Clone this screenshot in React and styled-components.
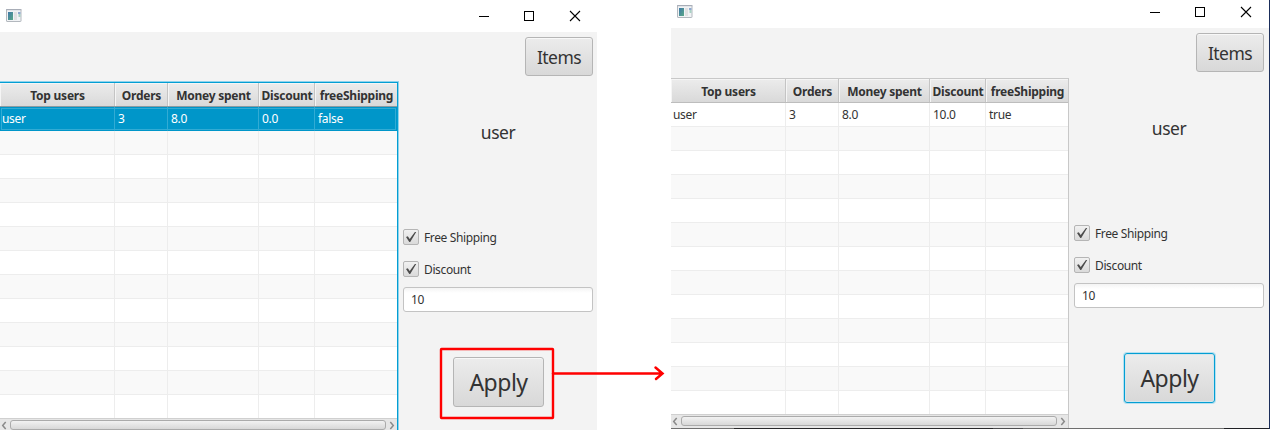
import React from 'react';
import styled, { createGlobalStyle, css } from 'styled-components';

const Global = createGlobalStyle`
  * { box-sizing: border-box; }
  body { margin: 0; background: #fff; overflow: hidden; }
  #root { font-family: "Noto Sans", "Open Sans", sans-serif; font-size: 12px; color: #333; }
`;

const Page = styled.main`
  position: relative;
  display: flex;
  gap: 74px;
  width: 1270px;
  height: 430px;
  overflow: hidden;
`;

const Window = styled.section`
  display: flex;
  flex-direction: column;
  flex: none;
  width: ${p => (p.$framed ? 599 : 597)}px;
  height: ${p => (p.$framed ? 429 : 430)}px;
  background: #f3f3f3;
  ${p => p.$framed && css`
    border-right: 1px solid #1a2d5a;
  `}
`;

const BottomEdge = styled.div`
  flex: none;
  height: 1px;
  background: linear-gradient(90deg, #707070 63px, #28282a 63px 322px, #4c4c4e 322px 352px, #6e6e6e 352px 553px, #1f2024 553px);
`;

const TitleBar = styled.header`
  display: flex;
  flex: none;
  align-items: center;
  justify-content: space-between;
  height: ${p => p.$h}px;
  padding: ${p => (p.$framed ? '0 17px 4px 6px' : '0 16px 0 6px')};
  background: #fff;
`;

const Controls = styled.div`
  display: flex;
  gap: 34px;
  svg { display: block; }
`;

const Content = styled.div`
  display: flex;
  flex: 1;
  min-height: 0;
`;

const TableSide = styled.div`
  flex: none;
  width: ${p => (p.$focused ? 399 : 398)}px;
  margin-right: ${p => (p.$focused ? 0 : 1)}px;
  padding-top: ${p => (p.$focused ? 49 : 50)}px;
`;

const TableView = styled.div`
  position: relative;
  height: 100%;
  overflow: hidden;
  border-top: 1px solid ${p => (p.$focused ? '#039ed3' : '#c8c8c8')};
  border-right: 1px solid ${p => (p.$focused ? '#039ed3' : '#c8c8c8')};
  ${p => p.$focused && css`
    margin-right: 1px;
    margin-top: 1px;
    height: calc(100% - 1px);
    box-shadow: 0 0 0 1px #8fd3ec;
  `}
`;

const Grid = styled.div`
  display: grid;
  grid-template-columns: 115px 53px 91px 56px 1fr;
`;

const HeaderRow = styled(Grid)`
  height: 24px;
  font-weight: 700;
  background: linear-gradient(#ececec, #d9d9d9);
  border-bottom: 1px solid ${p => (p.$focused ? '#8b9ba1' : '#bdbdbd')};
`;

const HeaderCell = styled.div`
  display: flex;
  align-items: center;
  justify-content: center;
  padding: 2px 0 0 1px;
  border-right: 1px solid #c4c4c4;
  box-shadow: inset 1px 1px 0 #f5f5f5;
  white-space: nowrap;
  &:last-child { border-right: 0; }
`;

const Row = styled(Grid)`
  height: ${p => (p.$last ? 23 : 24)}px;
  background: ${p => (p.$odd ? '#f9f9f9' : '#fff')};
  ${p => p.$selected && css`
    color: #fff;
    background: #0096c9;
    box-shadow: inset 0 0 0 1px #0096c9, inset 0 0 0 2px #32abd4;
  `}
`;

const Cell = styled.div`
  padding-left: ${p => (p.$first ? 2 : 3)}px;
  line-height: 23px;
  border-right: 1px solid ${p => (p.$selected ? '#32abd4' : '#ededed')};
  border-bottom: ${p => (p.$last ? 0 : 1)}px solid ${p => (p.$selected ? '#0096c9' : '#ededed')};
  &:last-child { border-right: 0; }
`;

const ScrollBar = styled.div`
  display: flex;
  align-items: flex-start;
  justify-content: space-between;
  height: 14px;
  padding: 1px 2px 0 1px;
  background: #e6e6e6;
  border-top: 1px solid #d0d0d0;
  svg { display: block; flex: none; margin-top: 1px; }
`;

const Thumb = styled.div`
  width: 376px;
  height: 10px;
  border: 1px solid #ababab;
  border-radius: 3px;
  background: linear-gradient(#f2f2f2, #d8d8d8);
`;

const Fit = styled.span`
  display: inline-block;
  flex: none;
  white-space: nowrap;
  letter-spacing: ${p => p.$ls || 0}px;
`;

const SidePanel = styled.aside`
  display: flex;
  flex-direction: column;
  align-items: center;
  flex: none;
  width: 198px;
  padding: 5px 4px 0;
`;

const Button = styled.button`
  display: flex;
  align-items: center;
  justify-content: center;
  flex: none;
  padding: 0;
  font-family: inherit;
  color: #333;
  border: 1px solid #b5b5b5;
  border-radius: 3px;
  background: linear-gradient(#ececec, #d8d8d8);
  box-shadow: inset 0 1px 0 #f8f8f8;
`;

const ItemsButton = styled(Button)`
  align-self: flex-end;
  width: 68px;
  height: 39px;
  font-size: 17.5px;
`;

const ApplyButton = styled(Button)`
  width: 91px;
  height: 50px;
  margin: 45px 0 0 1px;
  font-size: 23px;
  ${p => p.$focused && css`
    border-color: #039ed3;
    box-shadow: 0 0 0 1px #b5e0f0, inset 0 0 0 1px #d3e6ed;
  `}
`;

const UserName = styled.div`
  height: 28px;
  margin-top: 43px;
  font-size: 17.5px;
  line-height: 27px;
`;

const CheckRow = styled.label`
  display: flex;
  align-items: center;
  align-self: stretch;
  gap: 5px;
  height: 16px;
  margin-top: ${p => p.$top}px;
`;

const CheckBox = styled.span`
  display: flex;
  align-items: center;
  justify-content: center;
  width: 16px;
  height: 16px;
  border: 1px solid #b5b5b5;
  border-radius: 2px;
  background: linear-gradient(#f1f1f1, #dadada);
`;

const Field = styled.div`
  align-self: stretch;
  flex: none;
  height: 25px;
  margin-top: 10px;
  padding-left: 7px;
  line-height: 23px;
  border: 1px solid #c3c3c3;
  border-radius: 3px;
  background: linear-gradient(#f4f4f4, #fff 5px);
`;

const Annotation = styled.svg`
  position: absolute;
  left: 436px;
  top: 344px;
`;

const AppIcon = () => (
  <svg width="17" height="14" viewBox="0 0 17 14">
    <defs>
      <linearGradient id="pane" x1="0" y1="0" x2="1" y2="1">
        <stop offset="0" stopColor="#3f78a8" />
        <stop offset="1" stopColor="#59a886" />
      </linearGradient>
    </defs>
    <rect x="0.5" y="0.5" width="14.5" height="12" rx="0.5" fill="#f1f3f5" stroke="#b3b8be" />
    <path d="M0 0.7h15.5" stroke="#a5aab5" />
    <rect x="2" y="3" width="5" height="8" fill="url(#pane)" />
    <path d="M8 3h3v8h-3z" fill="#e0e1e2" />
    <path d="M12 3h2.5v2h-2.5z" fill="#8fa9cf" />
    <path d="M12.5 5h2v3h-2z" fill="#a9d1c4" />
  </svg>
);

const WindowControls = () => (
  <Controls>
    <svg width="12" height="12"><path d="M2 6.5h10" stroke="#000" /></svg>
    <svg width="12" height="12"><rect x="1.5" y="1.5" width="9" height="9" fill="none" stroke="#000" /></svg>
    <svg width="12" height="12"><path d="M1 1l10 10M11 1L1 11" stroke="#000" strokeWidth="1.1" /></svg>
  </Controls>
);

const Chevron = ({ right }) => (
  <svg width="6" height="9" viewBox="0 0 6 9">
    <path d={right ? 'M1.3 1l3 3.5-3 3.5' : 'M4.7 1l-3 3.5 3 3.5'} fill="none" stroke="#8a8a8a" strokeWidth="1.5" />
  </svg>
);

const Tick = () => (
  <svg width="12" height="12" viewBox="0 0 12 12">
    <path d="M1 6.1L2.8 5.2 4.7 8 9.9 0.9 11.2 1 5.2 11H4.3z" fill="#4c4c4c" />
  </svg>
);

const columns = ['Top users', 'Orders', 'Money spent', 'Discount', 'freeShipping'];
const rowCount = 13;

const Table = ({ values, focused }) => (
  <TableSide $focused={focused}>
    <TableView $focused={focused}>
      <HeaderRow $focused={focused}>
        {columns.map(name => <HeaderCell key={name}><Fit $ls={-0.24}>{name}</Fit></HeaderCell>)}
      </HeaderRow>
      {Array.from({ length: rowCount }, (_, r) => (
        <Row key={r} $odd={r % 2 === 1} $selected={focused && r === 0} $last={r === rowCount - 1}>
          {columns.map((name, c) => (
            <Cell key={name} $first={c === 0} $selected={focused && r === 0} $last={r === rowCount - 1}>
              {r === 0 && <Fit $ls={-0.3}>{values[c]}</Fit>}
            </Cell>
          ))}
        </Row>
      ))}
      <ScrollBar><Chevron /><Thumb /><Chevron right /></ScrollBar>
    </TableView>
  </TableSide>
);

const Check = ({ top, children }) => (
  <CheckRow $top={top}><CheckBox><Tick /></CheckBox><Fit $ls={-0.37}>{children}</Fit></CheckRow>
);

const ShopWindow = ({ titleHeight, values, tableFocused, framed }) => (
  <Window $framed={framed}>
    <TitleBar $h={titleHeight} $framed={framed}><AppIcon /><WindowControls /></TitleBar>
    <Content>
      <Table values={values} focused={tableFocused} />
      <SidePanel>
        <ItemsButton><Fit $ls={-0.55}>Items</Fit></ItemsButton>
        <UserName><Fit $ls={-0.5}>user</Fit></UserName>
        <Check top={82}>Free Shipping</Check>
        <Check top={16}>Discount</Check>
        <Field><Fit $ls={-0.3}>10</Fit></Field>
        <ApplyButton $focused={framed}><Fit $ls={-0.5}>Apply</Fit></ApplyButton>
      </SidePanel>
    </Content>
    {framed && <BottomEdge />}
  </Window>
);

export default function App() {
  return (
    <Page>
      <Global />
      <ShopWindow titleHeight={32} tableFocused values={['user', '3', '8.0', '0.0', 'false']} />
      <ShopWindow titleHeight={28} framed values={['user', '3', '8.0', '10.0', 'true']} />
      <Annotation width="234" height="80" viewBox="436 344 234 80" fill="none" stroke="#ff0000">
        <rect x="441" y="349" width="112" height="69" rx="0.5" strokeWidth="2.4" />
        <path d="M553 373.5h109M655.5 367.5l7 6-6.5 5.5" strokeWidth="2.5" strokeLinecap="round" />
      </Annotation>
    </Page>
  );
}
